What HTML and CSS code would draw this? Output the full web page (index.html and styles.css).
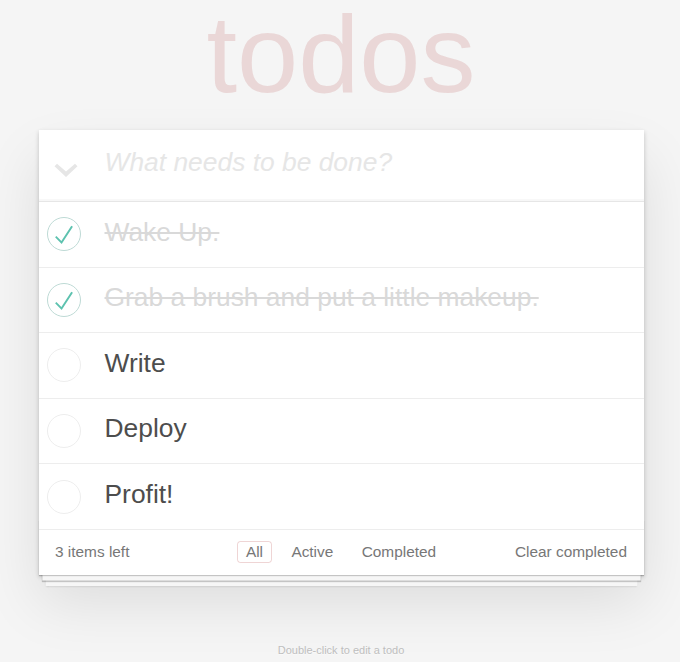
FILE: index.html
```html
<!DOCTYPE html>
<html lang="en">
<head>
<meta charset="utf-8">
<title>todos</title>
<link rel="stylesheet" href="styles.css">
</head>
<body>
<section class="todoapp">
  <header class="header">
    <h1 class="title">todos</h1>
    <div class="new-row">
      <span class="toggle-all">
        <svg width="26" height="16" viewBox="0 0 26 16"><path d="M1.5 3.2 L4 0.8 L13 8.6 L22 0.8 L24.5 3.2 L13 14 Z" fill="#e6e6e6"/></svg>
      </span>
      <input class="new-todo" type="text" placeholder="What needs to be done?">
    </div>
  </header>
  <ul class="todo-list">
    <li class="todo completed">
      <span class="toggle"><svg width="34" height="34" viewBox="-1.5 -1.5 103 103"><circle cx="50" cy="50" r="50" fill="none" stroke="#bddad5" stroke-width="3"/><path fill="#5dc2af" d="M72 25L42 71 27 56l-4 4 20 20 34-52z"/></svg></span>
      <label class="todo-label">Wake Up.</label>
    </li>
    <li class="todo completed">
      <span class="toggle"><svg width="34" height="34" viewBox="-1.5 -1.5 103 103"><circle cx="50" cy="50" r="50" fill="none" stroke="#bddad5" stroke-width="3"/><path fill="#5dc2af" d="M72 25L42 71 27 56l-4 4 20 20 34-52z"/></svg></span>
      <label class="todo-label">Grab a brush and put a little makeup.</label>
    </li>
    <li class="todo">
      <span class="toggle"><svg width="34" height="34" viewBox="-1.5 -1.5 103 103"><circle cx="50" cy="50" r="50" fill="none" stroke="#ededed" stroke-width="3"/></svg></span>
      <label class="todo-label">Write</label>
    </li>
    <li class="todo">
      <span class="toggle"><svg width="34" height="34" viewBox="-1.5 -1.5 103 103"><circle cx="50" cy="50" r="50" fill="none" stroke="#ededed" stroke-width="3"/></svg></span>
      <label class="todo-label">Deploy</label>
    </li>
    <li class="todo">
      <span class="toggle"><svg width="34" height="34" viewBox="-1.5 -1.5 103 103"><circle cx="50" cy="50" r="50" fill="none" stroke="#ededed" stroke-width="3"/></svg></span>
      <label class="todo-label">Profit!</label>
    </li>
  </ul>
  <footer class="footer">
    <span class="todo-count"><strong class="count-num">3</strong> items left</span>
    <ul class="filters">
      <li><a class="filter selected">All</a></li>
      <li><a class="filter">Active</a></li>
      <li><a class="filter">Completed</a></li>
    </ul>
    <button class="clear-completed">Clear completed</button>
  </footer>
</section>
<footer class="info">
  <p class="info-text">Double-click to edit a todo</p>
</footer>
</body>
</html>
```
FILE: styles.css
```css
html, body {
  margin: 0;
  padding: 0;
}
body {
  font-family: "Liberation Sans", Arial, sans-serif;
  font-size: 15.4px;
  line-height: 1.4em;
  background: #f5f5f5;
  color: #4d4d4d;
  font-weight: 300;
  padding-top: 130px;
  padding-left: 2px;
}
.todoapp {
  position: relative;
  width: 605px;
  margin: 0 auto 44px;
  background: #fff;
  box-shadow: 0 2.2px 4.4px 0 rgba(0,0,0,0.2), 0 27.5px 55px 0 rgba(0,0,0,0.1);
}
.title {
  position: absolute;
  top: -130px;
  left: 0;
  right: 0;
  margin: 0;
  font-size: 110px;
  line-height: 108px;
  font-weight: 100;
  text-align: center;
  color: rgba(175, 47, 47, 0.15);
}
.new-row {
  position: relative;
  display: flex;
  align-items: center;
  box-shadow: inset 0 -2px 1px rgba(0,0,0,0.03);
}
.toggle-all {
  position: absolute;
  left: 14px;
  top: 33px;
  width: 26px;
  height: 16px;
  display: flex;
}
.new-todo {
  flex: 1;
  min-width: 0;
  margin: 0;
  border: none;
  outline: none;
  background: transparent;
  font-family: inherit;
  font-size: 26.4px;
  line-height: 37px;
  height: 37px;
  padding: 14px 17.6px 20px 66px;
  color: #4d4d4d;
  box-sizing: content-box;
}
.new-todo::placeholder {
  font-style: italic;
  font-weight: 300;
  color: #e6e6e6;
}
.todo-list {
  margin: 0;
  padding: 0;
  list-style: none;
  border-top: 1px solid #e6e6e6;
}
.todo {
  display: flex;
  align-items: center;
  border-bottom: 1px solid #ededed;
  font-size: 26.4px;
}
.toggle {
  display: flex;
  width: 34px;
  height: 34px;
  margin-left: 8px;
  flex: none;
}
.todo-label {
  display: block;
  padding: 14.5px 66px 18.4px 24px;
  line-height: 1.2;
  color: #4d4d4d;
  word-break: break-all;
}
.completed .todo-label {
  color: #d9d9d9;
  text-decoration: line-through;
}
.footer {
  position: relative;
  display: grid;
  grid-template-columns: 1fr auto 1fr;
  align-items: center;
  height: 22px;
  padding: 11px 16.5px 12px;
  color: #777;
  font-size: 15.4px;
}
.footer::before {
  content: '';
  position: absolute;
  right: 0;
  bottom: 0;
  left: 0;
  height: 55px;
  overflow: hidden;
  box-shadow: 0 1px 1px rgba(0,0,0,0.2),
              0 8.8px 0 -3.3px #f6f6f6,
              0 9.9px 1px -3.3px rgba(0,0,0,0.2),
              0 17.6px 0 -6.6px #f6f6f6,
              0 18.7px 2.2px -6.6px rgba(0,0,0,0.2);
}
.todo-count {
  position: relative;
  justify-self: start;
  line-height: 22px;
}
.count-num {
  font-weight: 300;
}
.filters {
  position: relative;
  display: flex;
  align-items: center;
  margin: 0;
  padding: 0;
  list-style: none;
}
.filter {
  display: block;
  margin: 0 5.5px;
  padding: 1px 7.7px;
  line-height: 18px;
  border: 1px solid transparent;
  border-radius: 3.3px;
  color: inherit;
  text-decoration: none;
}
.filter.selected {
  border-color: rgba(175, 47, 47, 0.2);
}
.clear-completed {
  position: relative;
  justify-self: end;
  margin: 0;
  padding: 0;
  border: none;
  background: none;
  font-family: inherit;
  font-size: 15.4px;
  line-height: 22px;
  font-weight: 300;
  color: #777;
}
.info {
  margin: 70px auto 0;
  color: #bfbfbf;
  font-size: 11px;
  text-shadow: 0 1px 0 rgba(255,255,255,0.5);
  text-align: center;
}
.info-text {
  margin: 0;
  line-height: 1;
}
```
